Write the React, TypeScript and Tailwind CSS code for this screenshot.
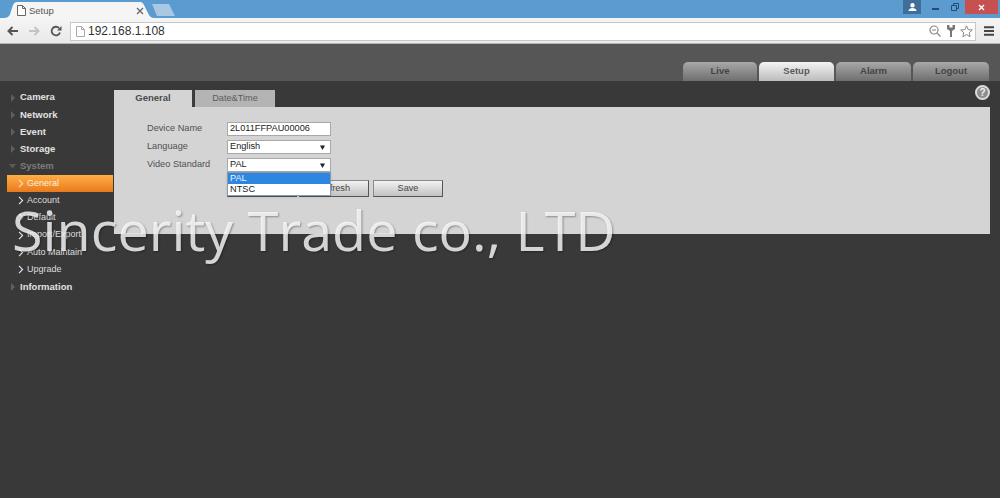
import React from "react";

const font = { fontFamily: '"Liberation Sans", Arial, sans-serif' };

function Tri({ down = false }: { down?: boolean }) {
  return (
    <svg width="8" height="8" viewBox="0 0 8 8" className="shrink-0">
      {down ? <path d="M0 2h7L3.5 6.5z" fill="#5a5a5a" /> : <path d="M2 0l4 4-4 4z" fill="#5f5f5f" />}
    </svg>
  );
}

function Chev({ color = "#e8e8e8" }: { color?: string }) {
  return (
    <svg width="6" height="9" viewBox="0 0 6 9" className="shrink-0">
      <path d="M1 .8l3.6 3.7L1 8.2" fill="none" stroke={color} strokeWidth="1.1" />
    </svg>
  );
}

function MainItem({ label, down, dim }: { label: string; down?: boolean; dim?: boolean }) {
  return (
    <div className="h-[17.2px] flex items-center pl-[9px] gap-[3px]">
      <Tri down={down} />
      <span className={`text-[9.5px] font-bold ${dim ? "text-[#7c7c7c]" : "text-[#e2e2e2]"}`}>{label}</span>
    </div>
  );
}

function SubItem({ label }: { label: string }) {
  return (
    <div className="h-[17.2px] flex items-center pl-[18px] gap-[3px]">
      <Chev />
      <span className="text-[9px] text-[#dedede]">{label}</span>
    </div>
  );
}

function NavTab({ label, active, w }: { label: string; active?: boolean; w: string }) {
  return (
    <div
      className={`${w} h-[19px] rounded-t-[5px] flex items-center justify-center text-[9.5px] font-bold ${
        active
          ? "bg-gradient-to-b from-[#f4f4f4] to-[#bcbcbc] text-[#5a5a5a]"
          : "bg-gradient-to-b from-[#a8a8a8] to-[#6f6f6f] text-[#444]"
      }`}
    >
      {label}
    </div>
  );
}

function Field({ label, value, select }: { label: string; value: string; select?: boolean }) {
  return (
    <div className="h-[18px] flex items-center">
      <span className="w-[80px] text-[9.2px] text-[#505050]">{label}</span>
      <div className="w-[104px] h-[14px] bg-white border border-[#a8a8a8] flex items-center justify-between pl-[2px] pr-[5px] text-[9.2px] text-[#222]">
        <span>{value}</span>
        {select && (
          <svg width="5" height="5" viewBox="0 0 5 5">
            <path d="M0 .5h5L2.5 5z" fill="#222" />
          </svg>
        )}
      </div>
    </div>
  );
}

function Btn({ label, w }: { label: string; w: string }) {
  return (
    <div className={`${w} h-[17px] border border-[#8a8a8a] border-b-[#555] border-r-[#555] bg-gradient-to-b from-[#f2f2f2] to-[#c2c2c2] flex items-center justify-center text-[9.2px] text-[#444]`}>
      {label}
    </div>
  );
}

export default function App() {
  return (
    <div className="relative w-[1000px] h-[498px] overflow-hidden bg-[#393939] flex flex-col" style={font}>
      {/* browser title bar */}
      <div className="h-[18px] bg-[#5b9bd0] flex items-end relative">
        <div className="relative ml-[4px] w-[150px] h-[16px]">
          <svg width="150" height="16" viewBox="0 0 150 16" className="absolute inset-0">
            <path d="M0 16C5 16 6 13 7 9L9 3C10 1 11 0 13 0H136C138 0 139 1 140 3L145 13C146 15 148 16 150 16Z" fill="#f5f5f5" />
          </svg>
          <svg width="9" height="11" viewBox="0 0 9 11" className="absolute left-[13px] top-[3px]">
            <path d="M.5.5h5l3 3v7h-8zM5.5.5v3h3" fill="#fff" stroke="#666" strokeWidth="1" />
          </svg>
          <span className="absolute left-[25px] top-[2px] text-[9.5px] text-[#555]">Setup</span>
          <svg width="8" height="8" viewBox="0 0 8 8" className="absolute left-[132px] top-[5px]">
            <path d="M1 1l6 6M7 1L1 7" stroke="#666" strokeWidth="1.3" />
          </svg>
        </div>
        <svg width="24" height="12" viewBox="0 0 24 12" className="ml-[-2px] mb-[2px]">
          <path d="M0 0H17L23 12H5Z" fill="#a9c8e4" />
        </svg>
        <div className="ml-auto flex items-start h-full self-start">
          <div className="w-[18px] h-[14px] bg-[#3f6f99] flex items-center justify-center mr-[11px]">
            <svg width="9" height="9" viewBox="0 0 9 9"><path d="M4.5 0a2 2 0 0 1 0 4.4 2 2 0 0 1 0-4.4zM.5 8c0-2 2-3 4-3s4 1 4 3z" fill="#fff" /></svg>
          </div>
          <div className="w-[7px] h-[2px] bg-[#234d75] mt-[8px] mr-[12px]" />
          <svg width="8" height="8" viewBox="0 0 8 8" className="mt-[3px] mr-[6px]"><path d="M.5 2.5h5v5h-5zM2.5 2.5V.5h5v5h-2" fill="none" stroke="#234d75" /></svg>
          <div className="w-[33px] h-[14px] mr-[2px] bg-[#c75050] flex items-center justify-center">
            <svg width="7" height="7" viewBox="0 0 7 7"><path d="M1 1l5 5M6 1L1 6" stroke="#fff" strokeWidth="1.4" /></svg>
          </div>
        </div>
      </div>
      {/* browser toolbar */}
      <div className="h-[26px] bg-gradient-to-b from-[#f5f5f5] to-[#e9e9e9] border-b border-[#b5b5b5] flex items-center">
        <svg width="12" height="10" viewBox="0 0 12 10" className="ml-[7px]"><path d="M11 5H2M5.5 1L1.5 5l4 4" fill="none" stroke="#555" strokeWidth="2" /></svg>
        <svg width="12" height="10" viewBox="0 0 12 10" className="ml-[9px]"><path d="M1 5h9M6.5 1l4 4-4 4" fill="none" stroke="#c4c4c4" strokeWidth="2" /></svg>
        <svg width="12" height="12" viewBox="0 0 12 12" className="ml-[10px]"><path d="M10 7.5A4.3 4.3 0 1 1 9 3" fill="none" stroke="#555" strokeWidth="1.8" /><path d="M11.5 1v4.5H7z" fill="#555" /></svg>
        <div className="ml-[8px] w-[906px] h-[19px] mt-[1px] bg-white border border-[#c8c8c8] flex items-center">
          <svg width="9" height="11" viewBox="0 0 9 11" className="ml-[5px]"><path d="M.5.5h5l3 3v7h-8zM5.5.5v3h3" fill="#fff" stroke="#aaa" /></svg>
          <span className="ml-[3px] text-[12px] text-[#333]">192.168.1.108</span>
          <div className="ml-auto flex items-center pr-[2px]">
            <svg width="12" height="12" viewBox="0 0 12 12"><circle cx="5" cy="5" r="4" fill="none" stroke="#888" strokeWidth="1.2" /><path d="M8 8l3.5 3.5M3 5h4" stroke="#888" strokeWidth="1.2" /></svg>
            <svg width="8" height="12" viewBox="0 0 8 12" className="ml-[6px]"><path d="M0 0h2.5v2.5h3V0H8v4L5 6v6H3V6L0 4z" fill="#777" /></svg>
            <svg width="13" height="13" viewBox="0 0 13 13" className="ml-[5px]"><path d="M6.5.8l1.7 3.8 4.1.4-3.1 2.7.9 4-3.6-2.1-3.6 2.1.9-4L.7 5l4.1-.4z" fill="#fff" stroke="#888" /></svg>
          </div>
        </div>
        <svg width="10" height="10" viewBox="0 0 10 10" className="ml-[8px]"><path d="M0 1.2h10M0 5h10M0 8.8h10" stroke="#444" strokeWidth="1.9" /></svg>
      </div>
      {/* page header */}
      <div className="h-[37px] bg-[#565656] flex items-end justify-end pr-[11px] gap-[2px]">
        <NavTab label="Live" w="w-[74px]" />
        <NavTab label="Setup" active w="w-[75px]" />
        <NavTab label="Alarm" w="w-[75px]" />
        <NavTab label="Logout" w="w-[76px]" />
      </div>
      {/* page body */}
      <div className="flex-1 flex">
        <div className="w-[114px] pt-[8px] shrink-0">
          <MainItem label="Camera" />
          <MainItem label="Network" />
          <MainItem label="Event" />
          <MainItem label="Storage" />
          <MainItem label="System" down dim />
          <div className="ml-[7px] mr-[1px] h-[17.2px] bg-gradient-to-b from-[#ffae45] to-[#e87a1c] flex items-center pl-[11px] gap-[3px]">
            <Chev color="#ffe0b0" />
            <span className="text-[9px] text-[#fff0dc]">General</span>
          </div>
          <SubItem label="Account" />
          <SubItem label="Default" />
          <SubItem label="Import/Export" />
          <SubItem label="Auto Maintain" />
          <SubItem label="Upgrade" />
          <MainItem label="Information" />
        </div>
        <div className="flex-1 pt-[9px] pr-[10px]">
          <div className="flex h-[17px] relative">
            <div className="w-[80px] bg-[#d4d4d4] border-r-[2px] border-[#3d3d3d] flex items-center justify-center text-[9.5px] font-bold text-[#4a4a4a]">General</div>
            <div className="ml-[1px] w-[80px] bg-[#b4b4b4] flex items-center justify-center text-[9.2px] text-[#5c5c5c]">Date&amp;Time</div>
            <div className="absolute right-[0px] top-[-5px] w-[15px] h-[15px] rounded-full bg-[#8e8e8e] border-[2px] border-[#dcdcdc] flex items-center justify-center text-[10px] font-bold text-[#f0f0f0]">?</div>
          </div>
          <div className="h-[127px] bg-[#d4d4d4] pl-[33px] pt-[13px] relative">
            <Field label="Device Name" value="2L011FFPAU00006" />
            <Field label="Language" value="English" select />
            <Field label="Video Standard" value="PAL" select />
            <div className="flex ml-[80px] mt-[6px]">
              <Btn label="Default" w="w-[70px]" />
              <div className="w-[2px]" />
              <Btn label="Refresh" w="w-[70px]" />
              <div className="w-[4px]" />
              <Btn label="Save" w="w-[70px]" />
            </div>
            <div className="absolute left-[113px] top-[65px] w-[104px] h-[24px] border border-[#8a9aa8] bg-white text-[9.2px] shadow-sm">
              <div className="h-[11px] bg-[#2f86e0] text-[#e6f2ff] pl-[2px] leading-[11px]">PAL</div>
              <div className="h-[11px] text-[#222] pl-[2px] leading-[11px]">NTSC</div>
            </div>
          </div>
        </div>
      </div>
      {/* watermark over the page */}
      <div
        className="absolute left-[12px] top-[192px] text-[55.7px] leading-[75px] whitespace-nowrap text-white/80 pointer-events-none"
        style={{ fontFamily: '"Open Sans", "Noto Sans", sans-serif', textShadow: "1px 1px 2px rgba(0,0,0,0.35)" }}
      >
        Sincerity Trade co., LTD
      </div>
    </div>
  );
}
